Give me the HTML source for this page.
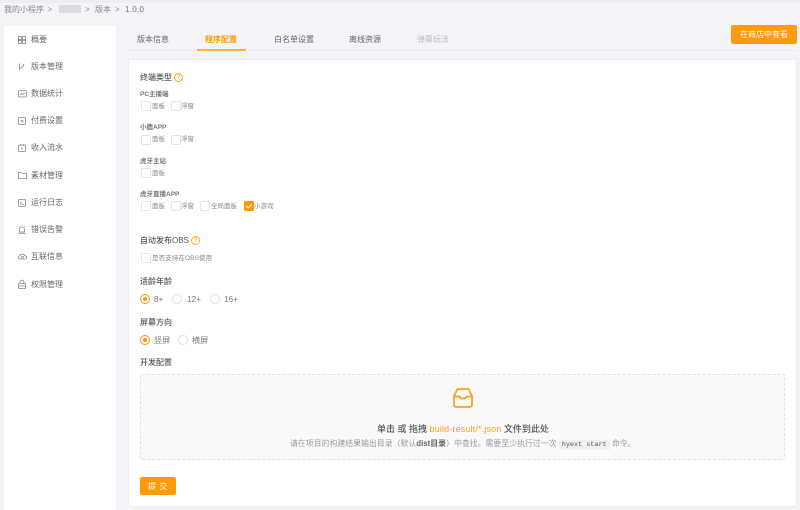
<!DOCTYPE html>
<html lang="zh"><head><meta charset="utf-8">
<style>
html,body{margin:0;padding:0}
body{width:800px;height:510px;overflow:hidden;position:relative;background:#f3f4f8;font-family:"Liberation Sans","Noto Sans CJK SC",sans-serif;color:#555}
.a,.t{position:absolute}
.t{white-space:nowrap;line-height:12px;height:12px;margin-top:1px}
.s{font-size:8px;color:#666}
.h{font-size:8px;color:#555;font-weight:500}
.l{font-size:6.5px;color:#777;font-weight:700}
.o{font-size:6.5px;color:#888}
.c{position:absolute;box-sizing:border-box;width:10px;height:10px;border:1px solid #e4e4e4;border-radius:1.5px;background:#fff}
.r{position:absolute;box-sizing:border-box;width:10px;height:10px;border:1px solid #e2e2e2;border-radius:50%;background:#fff}
.r.on{border-color:#ff9800}
.r.on:after{content:"";position:absolute;left:2px;top:2px;width:4px;height:4px;border-radius:50%;background:#ff9800}
svg{position:absolute;overflow:visible}
.i{fill:none;stroke:#888;stroke-width:.8}
.rt{font-size:8px;color:#777;letter-spacing:.2px}
.q{position:absolute;box-sizing:border-box;width:9px;height:9px;border:1px solid #ffa726;border-radius:50%;color:#ff9800;font-size:6.5px;line-height:7px;text-align:center}
</style></head><body>

<div class="a" style="left:0;top:0;width:800px;height:3px;background:#eeeef1"></div>
<div class="t" style="left:4px;top:2.5px;font-size:8px;color:#888">我的小程序</div>
<div class="t" style="left:47.5px;top:2.5px;font-size:8px;color:#888">&gt;</div>
<div class="a" style="left:59px;top:5px;width:22px;height:8px;background:#dcdcdf"></div>
<div class="t" style="left:85px;top:2.5px;font-size:8px;color:#888">&gt;</div>
<div class="t" style="left:95px;top:2.5px;font-size:8px;color:#888">版本</div>
<div class="t" style="left:115px;top:2.5px;font-size:8px;color:#888">&gt;</div>
<div class="t" style="left:125px;top:2.5px;font-size:8px;color:#777;letter-spacing:.3px">1.0.0</div>

<div class="a" style="left:4px;top:26px;width:112px;height:484px;background:#fff"></div>

<svg width="8" height="8" style="left:18px;top:35.5px" class="i" viewBox="0 0 8 8"><rect x=".5" y=".5" width="3" height="3"/><rect x="4.5" y=".5" width="3" height="3"/><rect x=".5" y="4.5" width="3" height="3"/><rect x="4.5" y="4.5" width="3" height="3"/></svg>
<div class="t s" style="left:31px;top:32.5px">概要</div>
<svg width="8" height="8" style="left:18px;top:62.5px" class="i" viewBox="0 0 8 8"><path d="M1.5 .5V7.5M1.5 5C4.5 5 5.5 4 5.5 1.5M4.5 2.5L6 1"/></svg>
<div class="t s" style="left:31px;top:60px">版本管理</div>
<svg width="9" height="8" style="left:17.5px;top:90px" class="i" viewBox="0 0 9 8"><rect x=".5" y=".5" width="8" height="6.5" rx="1"/><path d="M2 5L3.5 3.5L5 4.5L7 2.5"/></svg>
<div class="t s" style="left:31px;top:87px">数据统计</div>
<svg width="8" height="8" style="left:18px;top:117px" class="i" viewBox="0 0 8 8"><rect x=".5" y=".5" width="7" height="7" rx=".8"/><path d="M2.8 3L4 5L5.2 3"/></svg>
<div class="t s" style="left:31px;top:114px">付费设置</div>
<svg width="8" height="8" style="left:18px;top:144px" class="i" viewBox="0 0 8 8"><rect x=".5" y="1" width="7" height="6.5" rx=".6"/><path d="M2.5 .2V2M5.5 .2V2M4 3.2V5.8"/></svg>
<div class="t s" style="left:31px;top:141px">收入流水</div>
<svg width="9" height="7" style="left:17.5px;top:172px" class="i" viewBox="0 0 9 7"><path d="M.5 6.5V.5H3.5L4.5 1.5H8.5V6.5Z"/></svg>
<div class="t s" style="left:31px;top:168.5px">素材管理</div>
<svg width="8" height="8" style="left:18px;top:198.5px" class="i" viewBox="0 0 8 8"><rect x=".5" y=".5" width="7" height="7" rx=".6"/><path d="M2 2.5L3.5 4L2 5.5M4 5.5H6"/></svg>
<div class="t s" style="left:31px;top:195.5px">运行日志</div>
<svg width="8" height="9" style="left:18px;top:225px" class="i" viewBox="0 0 8 9"><path d="M1.5 7V4.5A2.5 2.5 0 0 1 6.5 4.5V7ZM.5 8.3H7.5M4 .2V1M.8 1.2L1.5 1.9M7.2 1.2L6.5 1.9"/></svg>
<div class="t s" style="left:31px;top:222.5px">错误告警</div>
<svg width="9" height="7" style="left:17.5px;top:253px" class="i" viewBox="0 0 9 7"><path d="M2.5 6.2H2A1.7 1.7 0 0 1 1.8 2.8A2.8 2.8 0 0 1 7 2.8A1.7 1.7 0 0 1 7 6.2H6.5"/><circle cx="4.5" cy="4.8" r="1.3"/></svg>
<div class="t s" style="left:31px;top:250px">互联信息</div>
<svg width="8" height="9" style="left:18px;top:279.5px" class="i" viewBox="0 0 8 9"><rect x=".5" y="3.5" width="7" height="5" rx=".6"/><path d="M2 3.5V2.2A2 2 0 0 1 6 2.2V3.5M.5 6H7.5"/></svg>
<div class="t s" style="left:31px;top:277.5px">权限管理</div>

<div class="t" style="left:137px;top:32.5px;font-size:8px;color:#666">版本信息</div>
<div class="t" style="left:205px;top:32.5px;font-size:8px;color:#ff9800;font-weight:700">程序配置</div>
<div class="t" style="left:274px;top:32.5px;font-size:8px;color:#666">白名单设置</div>
<div class="t" style="left:349px;top:32.5px;font-size:8px;color:#666">离线资源</div>
<div class="t" style="left:417px;top:32.5px;font-size:8px;color:#bbb">弹幕玩法</div>
<div class="a" style="left:129px;top:50px;width:667px;height:1px;background:#e8e8ea"></div>
<div class="a" style="left:197px;top:49px;width:49px;height:2px;background:#fbb040"></div>

<div class="a" style="left:731px;top:25px;width:66px;height:19px;background:#ff9a0a;border-radius:2px"></div>
<div class="t" style="left:731px;width:66px;text-align:center;top:27.5px;font-size:8px;color:#fff">在商店中查看</div>

<div class="a" style="left:129px;top:60px;width:667px;height:446px;background:#fff;border-radius:2px;box-shadow:0 0 1.5px #d8d8e0"></div>

<div class="t h" style="left:140px;top:71px">终端类型</div>
<div class="q" style="left:174px;top:73px">?</div>

<div class="t l" style="left:140px;top:87.5px">PC主播端</div>
<div class="c" style="left:141px;top:101px"></div><div class="t o" style="left:152px;top:99.5px">面板</div>
<div class="c" style="left:171px;top:101px"></div><div class="t o" style="left:181px;top:99.5px">浮窗</div>

<div class="t l" style="left:140px;top:121px">小鹿APP</div>
<div class="c" style="left:141px;top:134.5px"></div><div class="t o" style="left:152px;top:133px">面板</div>
<div class="c" style="left:171px;top:134.5px"></div><div class="t o" style="left:181px;top:133px">浮窗</div>

<div class="t l" style="left:140px;top:154.5px">虎牙主站</div>
<div class="c" style="left:141px;top:168px"></div><div class="t o" style="left:152px;top:166.5px">面板</div>

<div class="t l" style="left:140px;top:187.5px">虎牙直播APP</div>
<div class="c" style="left:141px;top:201px"></div><div class="t o" style="left:152px;top:199.5px">面板</div>
<div class="c" style="left:171px;top:201px"></div><div class="t o" style="left:181px;top:199.5px">浮窗</div>
<div class="c" style="left:200px;top:201px"></div><div class="t o" style="left:211px;top:199.5px">全局面板</div>
<div class="c" style="left:243.5px;top:201px;background:#ff9800;border-color:#ff9800"></div>
<svg width="10" height="10" style="left:243.5px;top:201px" viewBox="0 0 10 10"><path d="M2.2 5L4.2 7L7.8 3" fill="none" stroke="#fff" stroke-width="1.2"/></svg>
<div class="t o" style="left:254px;top:199.5px">小游戏</div>

<div class="t h" style="left:140px;top:233.5px">自动发布OBS</div>
<div class="q" style="left:191px;top:235.5px">?</div>
<div class="c" style="left:141px;top:253px"></div><div class="t o" style="left:152px;top:251.5px;letter-spacing:.1px">是否支持在OBS使用</div>

<div class="t h" style="left:140px;top:274.5px">适龄年龄</div>
<div class="r on" style="left:140px;top:294px"></div><div class="t rt" style="left:154px;top:292.5px">8+</div>
<div class="r" style="left:172px;top:294px"></div><div class="t rt" style="left:187px;top:292.5px">12+</div>
<div class="r" style="left:209.5px;top:294px"></div><div class="t rt" style="left:224px;top:292.5px">16+</div>

<div class="t h" style="left:140px;top:315.5px">屏幕方向</div>
<div class="r on" style="left:140px;top:335px"></div><div class="t rt" style="left:154px;top:333.5px">竖屏</div>
<div class="r" style="left:178px;top:335px"></div><div class="t rt" style="left:192px;top:333.5px">横屏</div>

<div class="t h" style="left:140px;top:356px">开发配置</div>

<div class="a" style="left:140px;top:374px;width:643px;height:84px;background:#fafafa;border:1px dashed #e2e2e2;border-radius:2px"></div>
<svg width="20" height="20" style="left:453px;top:387.5px" viewBox="0 0 20 20"><path d="M4.5 1H15.5L19 8V17A2 2 0 0 1 17 19H3A2 2 0 0 1 1 17V8ZM1 8.5H6.5L8 10.5H12L13.5 8.5H19" fill="none" stroke="#ff9e1b" stroke-width="1.8" stroke-linejoin="round"/></svg>
<div class="t" style="left:377px;top:422px;font-size:9px;color:#555;font-weight:500">单击 或 拖拽 <span style="color:#ff9f1c;font-weight:400;letter-spacing:.15px">build-result/*.json</span> 文件到此处</div>
<div class="t" style="left:290px;top:437px;font-size:7.9px;color:#999">请在项目的构建结果输出目录（默认<b style="color:#666">dist目录</b>）中查找。需要至少执行过一次 <span style="font-family:'Liberation Mono',monospace;font-size:6.8px;color:#555;background:#f0f0f0;padding:1px 3px;border-radius:2px">hyext start</span> 命令。</div>

<div class="a" style="left:140px;top:477px;width:36px;height:18px;background:#ff9a0a;border-radius:2px"></div>
<div class="t" style="left:140px;width:36px;text-align:center;top:479.5px;font-size:8px;color:#fff;letter-spacing:.5px">提 交</div>

</body></html>
